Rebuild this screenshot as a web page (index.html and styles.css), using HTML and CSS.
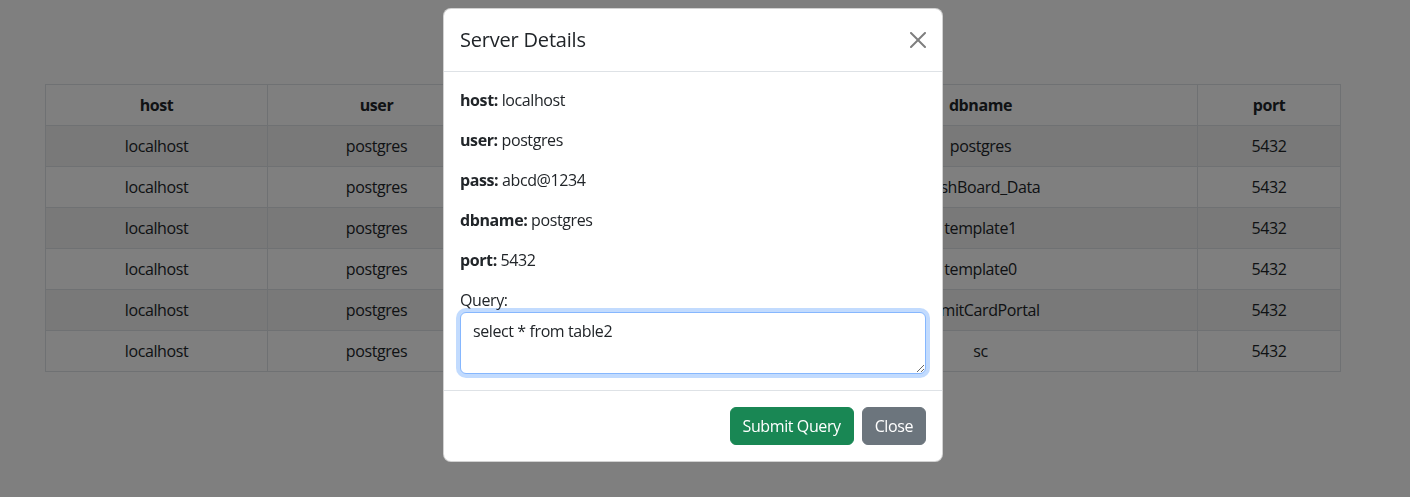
FILE: index.html
```html
<!DOCTYPE html>
<html lang="en">
<head>
<meta charset="utf-8">
<title>Server Details</title>
<link rel="stylesheet" href="styles.css">
</head>
<body>
<div class="page">
  <table class="servers">
    <colgroup>
      <col class="c-host"><col class="c-user"><col class="c-pass"><col class="c-db"><col class="c-port">
    </colgroup>
    <thead>
      <tr><th>host</th><th>user</th><th>pass</th><th>dbname</th><th>port</th></tr>
    </thead>
    <tbody>
      <tr><td>localhost</td><td>postgres</td><td>abcd@1234</td><td>postgres</td><td>5432</td></tr>
      <tr><td>localhost</td><td>postgres</td><td>abcd@1234</td><td>DashBoard_Data</td><td>5432</td></tr>
      <tr><td>localhost</td><td>postgres</td><td>abcd@1234</td><td>template1</td><td>5432</td></tr>
      <tr><td>localhost</td><td>postgres</td><td>abcd@1234</td><td>template0</td><td>5432</td></tr>
      <tr><td>localhost</td><td>postgres</td><td>abcd@1234</td><td>AdmitCardPortal</td><td>5432</td></tr>
      <tr><td>localhost</td><td>postgres</td><td>abcd@1234</td><td>sc</td><td>5432</td></tr>
    </tbody>
  </table>
</div>
<div class="backdrop"></div>
<div class="modal">
  <div class="modal-header">
    <h5 class="modal-title">Server Details</h5>
    <button class="btn-close" type="button" aria-label="Close">
      <svg width="16" height="16" viewBox="0 0 16 16"><path d="M.293.293a1 1 0 0 1 1.414 0L8 6.586 14.293.293a1 1 0 1 1 1.414 1.414L9.414 8l6.293 6.293a1 1 0 0 1-1.414 1.414L8 9.414l-6.293 6.293a1 1 0 0 1-1.414-1.414L6.586 8 .293 1.707a1 1 0 0 1 0-1.414z" fill="#000"/></svg>
    </button>
  </div>
  <div class="modal-body">
    <p><strong>host:</strong> localhost</p>
    <p><strong>user:</strong> postgres</p>
    <p><strong>pass:</strong> abcd@1234</p>
    <p><strong>dbname:</strong> postgres</p>
    <p><strong>port:</strong> 5432</p>
    <label class="form-label" for="q">Query:</label>
    <textarea id="q" class="form-control" rows="2">select * from table2</textarea>
  </div>
  <div class="modal-footer">
    <button class="btn btn-success" type="button">Submit Query</button>
    <button class="btn btn-secondary" type="button">Close</button>
  </div>
</div>
</body>
</html>
```
FILE: styles.css
```css
* { box-sizing: border-box; }
html, body { margin: 0; padding: 0; }
body {
  background: #fff;
  color: #212529;
  font-family: "Open Sans", "Noto Sans", sans-serif;
  font-size: 16px;
  line-height: 1.5;
  letter-spacing: -0.4px;
  width: 1410px;
  height: 497px;
  overflow: hidden;
}
.page { padding: 84px 0 0 45px; }
.servers {
  width: 1295px;
  border-collapse: collapse;
  table-layout: fixed;
  text-align: center;
}
.c-host { width: 222px; }
.c-user { width: 218px; }
.c-pass { width: 278px; }
.c-db { width: 434px; }
.c-port { width: 143px; }
.servers th, .servers td {
  border: 1px solid #dee2e6;
  padding: 8px;
  height: 41px;
}
.servers th { font-weight: 700; }
.servers tbody tr:nth-child(odd) td { background: rgba(0,0,0,0.05); }
.backdrop {
  position: fixed;
  inset: 0;
  background: rgba(0,0,0,0.5);
}
.modal {
  position: fixed;
  top: 8px;
  left: 443px;
  width: 500px;
  background: #fff;
  border: 1px solid rgba(0,0,0,0.175);
  border-radius: 8px;
  display: flex;
  flex-direction: column;
}
.modal-header {
  display: flex;
  align-items: center;
  justify-content: space-between;
  padding: 16px;
  border-bottom: 1px solid #dee2e6;
}
.modal-title {
  margin: 0;
  font-size: 20px;
  font-weight: 500;
  line-height: 1.5;
  letter-spacing: -0.2px;
}
.btn-close {
  border: 0;
  background: transparent;
  padding: 0;
  width: 16px;
  height: 16px;
  opacity: 0.5;
  display: flex;
}
.modal-body { padding: 16px; }
.modal-body p { margin: 0 0 16px; }
.modal-body strong { font-weight: 700; }
.form-label { display: block; }
.form-control {
  display: block;
  width: 100%;
  height: 62px;
  padding: 6px 12px;
  font: inherit;
  letter-spacing: inherit;
  color: #212529;
  border: 1px solid #86b7fe;
  border-radius: 6px;
  box-shadow: 0 0 0 4px rgba(13,110,253,0.25);
  outline: none;
  resize: vertical;
}
.modal-footer {
  display: flex;
  justify-content: flex-end;
  padding: 12px;
  border-top: 1px solid #dee2e6;
}
.btn {
  margin: 4px;
  padding: 6px 12px;
  font: inherit;
  letter-spacing: inherit;
  line-height: 1.5;
  color: #fff;
  border: 1px solid transparent;
  border-radius: 6px;
}
.btn-success { background: #198754; border-color: #198754; }
.btn-secondary { background: #6c757d; border-color: #6c757d; }
```
